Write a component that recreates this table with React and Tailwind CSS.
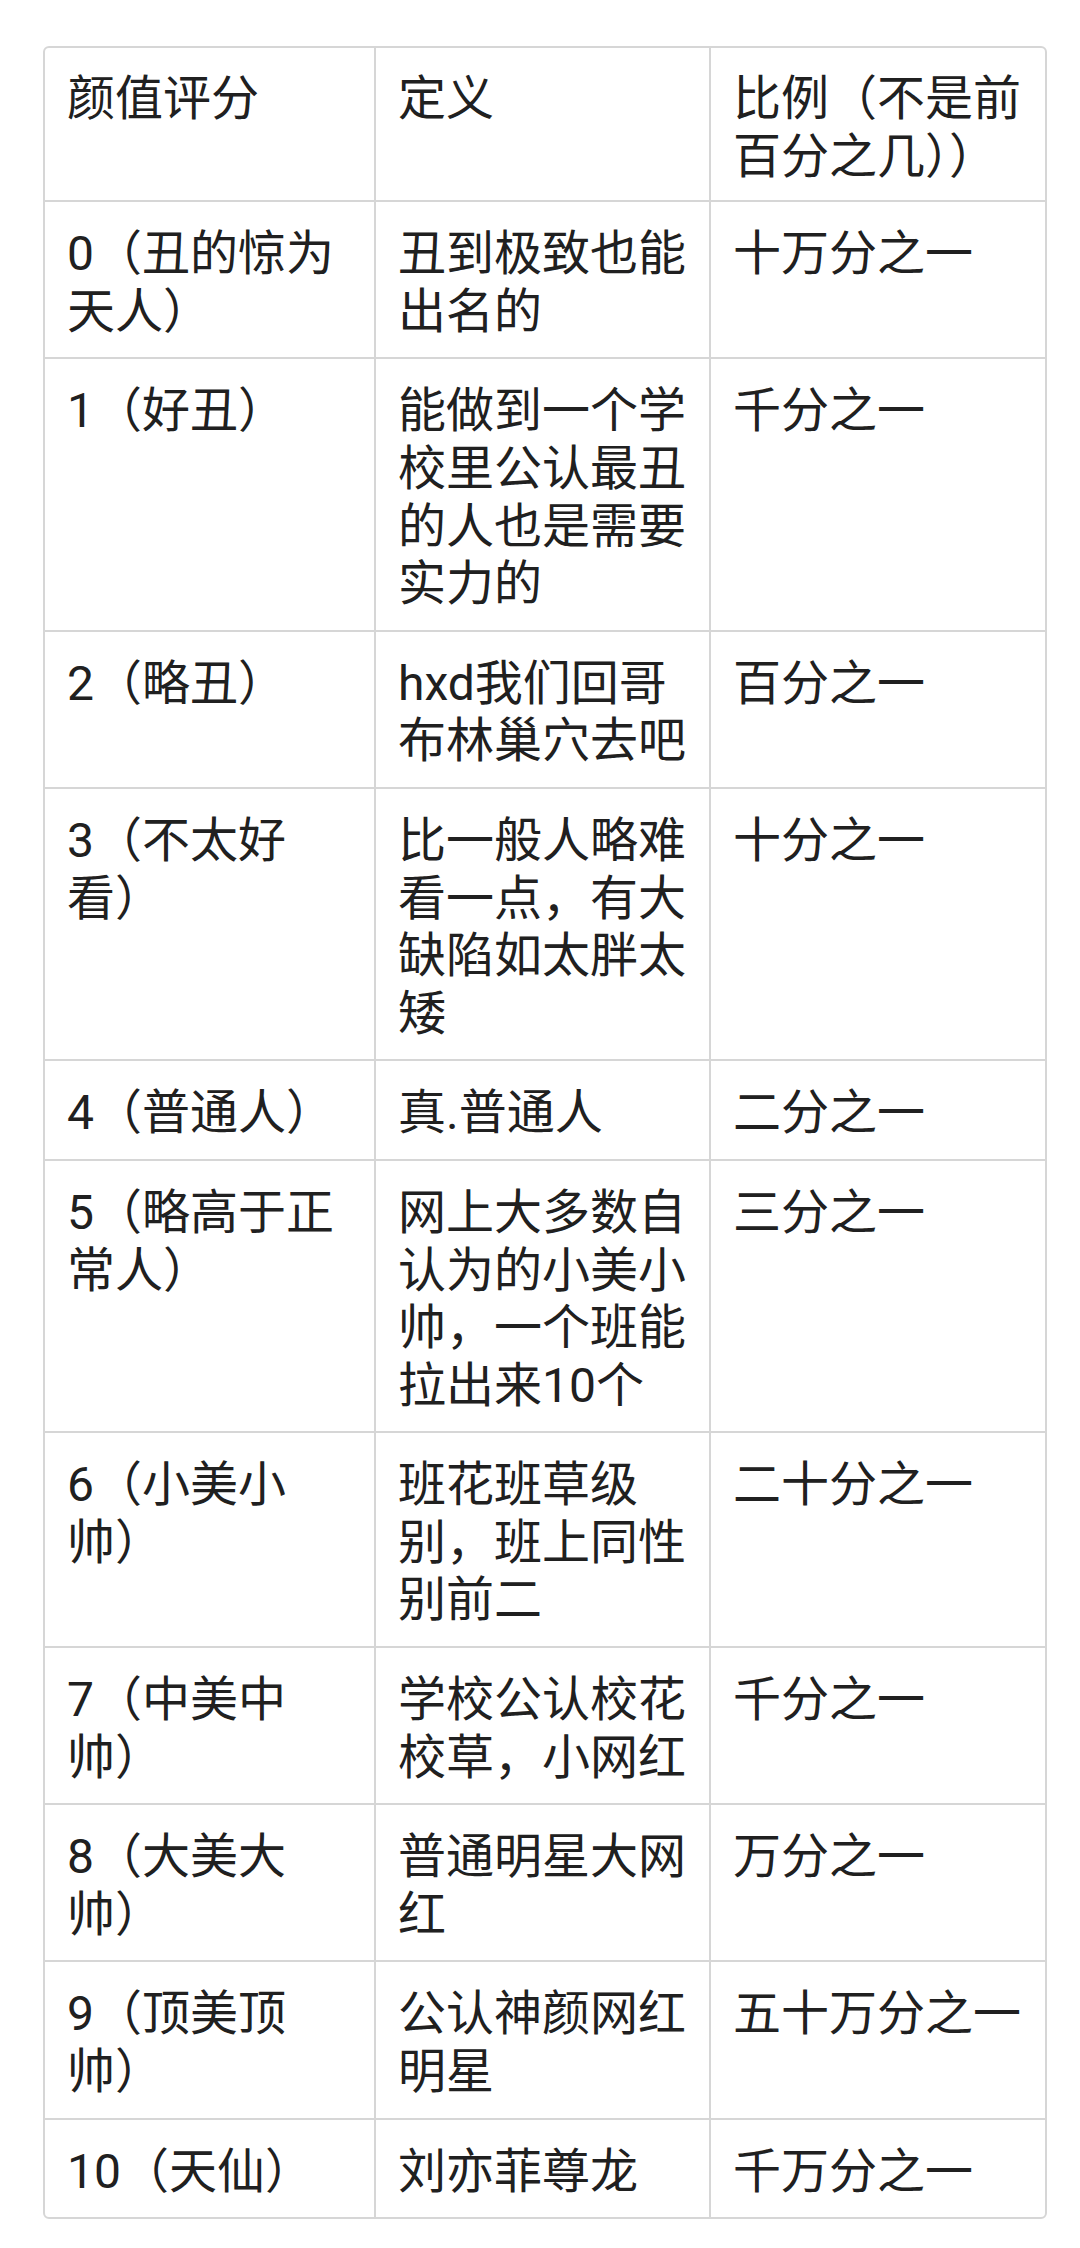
const rows = [
  ["颜值评分", "定义", "比例（不是前百分之几））"],
  ["0（丑的惊为天人）", "丑到极致也能出名的", "十万分之一"],
  ["1（好丑）", "能做到一个学校里公认最丑的人也是需要实力的", "千分之一"],
  ["2（略丑）", "hxd我们回哥布林巢穴去吧", "百分之一"],
  ["3（不太好看）", "比一般人略难看一点，有大缺陷如太胖太矮", "十分之一"],
  ["4（普通人）", "真.普通人", "二分之一"],
  ["5（略高于正常人）", "网上大多数自认为的小美小帅，一个班能拉出来10个", "三分之一"],
  ["6（小美小帅）", "班花班草级别，班上同性别前二", "二十分之一"],
  ["7（中美中帅）", "学校公认校花校草，小网红", "千分之一"],
  ["8（大美大帅）", "普通明星大网红", "万分之一"],
  ["9（顶美顶帅）", "公认神颜网红明星", "五十万分之一"],
  ["10（天仙）", "刘亦菲尊龙", "千万分之一"],
];

export default function App() {
  return (
    <div
      className="w-[1080px] min-h-[2248px] bg-white pt-[46px] pl-[43px]"
      style={{ fontFamily: 'Roboto, "Noto Sans CJK SC", sans-serif' }}
    >
      <div className="w-[1004px] border-2 border-[#d6d6d6] rounded-[6px] overflow-hidden">
        <div className="grid grid-cols-[331px_335px_334px] text-[48px] leading-[1.2] text-[#202020]">
          {rows.map((row, r) =>
            row.map((cell, c) => (
              <div
                key={r + "-" + c}
                className={`px-[22px] break-all ${
                  r === 0 ? "pt-[22px] pb-[15px]" : "pt-[23px] pb-[17px]"
                } ${c < 2 ? "border-r-2" : ""} ${
                  r < rows.length - 1 ? "border-b-2" : ""
                } border-[#d6d6d6]`}
              >
                {cell}
              </div>
            ))
          )}
        </div>
      </div>
    </div>
  );
}
